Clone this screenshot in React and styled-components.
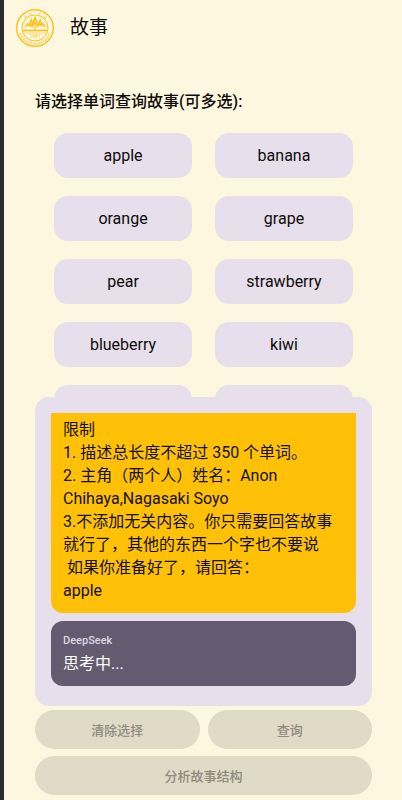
import React, { useState } from 'react';
import styled, { createGlobalStyle } from 'styled-components';

const GlobalStyle = createGlobalStyle`
	* {
		box-sizing: border-box;
	}

	body {
		margin: 0;
		background: #fef7df;
		color: #0e0c08;
		font-family: Roboto, 'Noto Sans CJK SC', sans-serif;
		font-size: 16px;
	}

	button {
		border: none;
		font-family: inherit;
	}
`;

const Page = styled.div`
	display: flex;
	flex-direction: column;
	height: 100vh;
	border-left: 4px solid #2b2b2b;
`;

const Header = styled.header`
	display: flex;
	align-items: center;
	gap: 16px;
	height: 56px;
	padding: 0 12px;
`;

const Logo = styled.svg`
	width: 38px;
	height: 38px;
	fill: none;
	stroke: #fcc21b;
`;

const LogoYear = styled.text`
	fill: #fcc21b;
	stroke: none;
	font-size: 5px;
	text-anchor: middle;
`;

const Title = styled.h1`
	margin: 0;
	font-size: 19px;
	font-weight: 400;
	line-height: 24px;
`;

const Main = styled.main`
	display: flex;
	flex: 1;
	flex-direction: column;
	min-height: 0;
	padding: 34px 30px 5px 31px;
`;

const Prompt = styled.h2`
	margin: 0 0 19px;
	font-size: 16px;
	font-weight: 500;
	line-height: 24px;
`;

const WordGrid = styled.div`
	display: grid;
	flex: 1;
	grid-template-columns: 1fr 1fr;
	grid-auto-rows: 45px;
	gap: 18px 23px;
	min-height: 0;
	padding: 0 19px;
	overflow: hidden;
`;

const WordButton = styled.button`
	border-radius: 14px;
	background: ${props => (props.$selected ? '#d3c6e0' : '#e7dfeb')};
	color: inherit;
	font-size: 16px;
`;

const ChatPanel = styled.section`
	display: flex;
	flex-direction: column;
	gap: 8px;
	padding: 16px 16px 20px;
	border-radius: 14px;
	background: #e7dfeb;
`;

const Bubble = styled.article`
	padding: 12px 12px 11px;
	border-radius: 12px;
	background: #645b70;
	color: #fff;
	line-height: 23px;
	white-space: pre-wrap;
`;

// the top of this one is scrolled out of the panel
const UserBubble = styled(Bubble)`
	padding-top: 5px;
	border-radius: 0 0 12px 12px;
	background: #ffc107;
	color: #14100a;
`;

const Author = styled.div`
	margin-bottom: 3px;
	color: #dcd8e0;
	font-size: 11px;
	font-weight: 500;
	line-height: 16px;
`;

const Actions = styled.div`
	display: grid;
	grid-template-columns: 1fr 1fr;
	gap: 7px 8px;
	padding-top: 4px;
`;

const ActionButton = styled.button`
	grid-column: ${props => (props.$wide ? '1 / -1' : 'auto')};
	height: 39px;
	border-radius: 20px;
	background: #e1dac6;
	color: #8f8a7d;
	font-size: 13px;
	font-weight: 500;
`;

const words = ['apple', 'banana', 'orange', 'grape', 'pear', 'strawberry', 'blueberry', 'kiwi', '', ''];

const request = `限制
1. 描述总长度不超过 350 个单词。
2. 主角（两个人）姓名：Anon Chihaya,Nagasaki Soyo
3.不添加无关内容。你只需要回答故事就行了，其他的东西一个字也不要说
 如果你准备好了，请回答：
apple`;

const SchoolLogo = () => (
	<Logo viewBox="0 0 38 38" aria-hidden="true">
		<circle cx="19" cy="19" r="18.3" strokeWidth="1.4" />
		<circle cx="19" cy="19" r="13" strokeWidth="1" />
		<g strokeWidth=".9" opacity=".75">
			<path d="M8.6 7.4l2 2M10.3 6.6l-1.2 2.6" />
			<path d="M14 3.8l.7 2.6M15.6 4l-2.2 1.6" />
			<path d="M22.6 3.7l1.8 2.4M24.8 4l-2.4 2" />
			<path d="M28.6 7l1 2.6M30.4 7.8l-2.6.8" />
		</g>
		<path d="M4.2 24.5A15.8 15.8 0 0 0 33.8 24.5" strokeWidth="2.4" strokeDasharray="1 1.1" opacity=".75" />
		<path d="M9.5 18l2.2-3.2 1.4 1.2 2.2-5.2 1.5 3.4L19 8.5l2.2 5.2 1.4 1.3 1.6-3.8 1.6 4 1-.6 2 3.4" strokeWidth="1.5" />
		<path d="M12.5 17.8l2.2-3 1.3 2.8 3-4 2.6 4 2.4-2.8 1.8 2.8" strokeWidth="1.2" />
		<path d="M19 9.5v11M16.3 14v3.5M22 15v2.5" strokeWidth="1.2" />
		<path d="M7 21.5h24" strokeWidth="1.7" />
		<path d="M7.5 23.9h23" strokeWidth=".5" />
		<LogoYear x="19" y="28.5">1981</LogoYear>
	</Logo>
);

export default function App() {
	const [selected, setSelected] = useState([]);

	const toggleWord = index => {
		setSelected(selected.includes(index) ? selected.filter(i => i !== index) : [...selected, index]);
	};

	return (
		<Page>
			<GlobalStyle />
			<Header>
				<SchoolLogo />
				<Title>故事</Title>
			</Header>
			<Main>
				<Prompt>请选择单词查询故事(可多选):</Prompt>
				<WordGrid>
					{words.map((word, index) => (
						<WordButton
							key={index}
							type="button"
							aria-label={word || '单词'}
							$selected={selected.includes(index)}
							onClick={() => toggleWord(index)}
						>
							{word}
						</WordButton>
					))}
				</WordGrid>
				<ChatPanel>
					<UserBubble>{request}</UserBubble>
					<Bubble>
						<Author>DeepSeek</Author>
						思考中...
					</Bubble>
				</ChatPanel>
				<Actions>
					<ActionButton type="button" disabled>清除选择</ActionButton>
					<ActionButton type="button" disabled>查询</ActionButton>
					<ActionButton type="button" disabled $wide>分析故事结构</ActionButton>
				</Actions>
			</Main>
		</Page>
	);
}
